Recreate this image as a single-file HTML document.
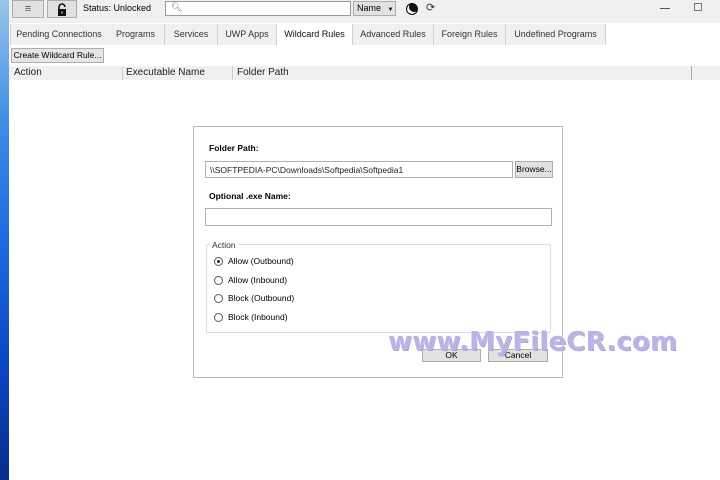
<!DOCTYPE html><html><head><style>
body{margin:0;width:720px;height:480px;position:relative;overflow:hidden;background:#fff;font-family:"Liberation Sans",sans-serif;font-size:9px;color:#000}
.a{position:absolute}
.tb{background:#f0f0f0;border-bottom:1px solid #d8d8d8}
.tab{position:absolute;top:24px;height:21px;line-height:21px;text-align:center;background:#f0f0f0;border-right:1px solid #d0d0d0;color:#333;font-size:9px}
.btn{background:#e1e1e1;border:1px solid #adadad;box-sizing:border-box;text-align:center}
.in{border:1px solid #b0b0b0;box-sizing:border-box;background:#fff}
.r{position:absolute;left:214px;width:7px;height:7px;border:1px solid #555;border-radius:50%}
.rl{position:absolute;left:228px;font-size:8.5px}
</style></head><body>
<div class="a" style="left:0;top:0;width:9px;height:480px;background:linear-gradient(160deg,#9cc6ea 0%,#3f8ee6 25%,#1d6ae0 50%,#0b47c4 75%,#082c8a 100%)"></div>
<div class="a tb" style="left:9px;top:0;width:711px;height:23px"></div>
<div class="a btn" style="left:12px;top:0;width:32px;height:18px;line-height:17px;font-size:11px;color:#555">≡</div>
<div class="a btn" style="left:47px;top:0;width:30px;height:18px"><svg width="12" height="14" style="margin-top:2px" viewBox="0 0 12 14"><path d="M3 6V4a3 3 0 0 1 6 0" stroke="#111" stroke-width="1.6" fill="none"/><rect x="2" y="6" width="8" height="7" fill="#111"/><rect x="5.5" y="8.5" width="1" height="2" fill="#fff"/></svg></div>
<div class="a" style="left:83px;top:3px;font-size:9px">Status: Unlocked</div>
<div class="a in" style="left:165px;top:1px;width:186px;height:15px;border-color:#999"><span style="position:absolute;left:5px;top:0;font-size:9px;color:#777">🔍︎</span></div>
<div class="a btn" style="left:353px;top:1px;width:43px;height:15px;line-height:13px;text-align:left;padding-left:3px;font-size:9px">Name <span style="font-size:6px;margin-left:4px">▼</span></div>
<div class="a" style="left:406px;top:3px;width:10px;height:10px;border-radius:50%;background:#111;border:1px solid #111;box-shadow:inset 2px -2px 0 #fff"></div>
<div class="a" style="left:426px;top:1px;font-size:11px;color:#333">⟳</div>
<div class="a" style="left:660px;top:8px;width:10px;height:1px;background:#555"></div>
<div class="a" style="left:694px;top:3px;width:6px;height:6px;border:1px solid #777"></div>
<div class="a" style="left:9px;top:23px;width:711px;height:22px;background:#fff"></div>
<div class="tab" style="left:10px;width:96px;border-left:1px solid #d0d0d0">Pending Connections</div>
<div class="tab" style="left:107px;width:57px">Programs</div>
<div class="tab" style="left:165px;width:52px">Services</div>
<div class="tab" style="left:218px;width:58px">UWP Apps</div>
<div class="tab" style="left:277px;width:75px;background:#fff;color:#111">Wildcard Rules</div>
<div class="tab" style="left:353px;width:80px">Advanced Rules</div>
<div class="tab" style="left:434px;width:71px">Foreign Rules</div>
<div class="tab" style="left:506px;width:99px">Undefined Programs</div>
<div class="a btn" style="left:11px;top:48px;width:93px;height:15px;line-height:13px;font-size:8.5px;background:#e5e5e5">Create Wildcard Rule...</div>
<div class="a" style="left:9px;top:66px;width:711px;height:14px;background:#f0f0f0"></div>
<div class="a" style="left:14px;top:67px;font-size:10px;color:#222">Action</div>
<div class="a" style="left:122px;top:66px;width:1px;height:14px;background:#ccc"></div>
<div class="a" style="left:126px;top:67px;font-size:10px;color:#222">Executable Name</div>
<div class="a" style="left:232px;top:66px;width:1px;height:14px;background:#ccc"></div>
<div class="a" style="left:237px;top:67px;font-size:10px;color:#222">Folder Path</div>
<div class="a" style="left:691px;top:66px;width:1px;height:14px;background:#aaa"></div>
<div class="a" style="left:193px;top:126px;width:370px;height:252px;border:1px solid #bcbcbc;box-sizing:border-box;background:#fff"></div>
<div class="a" style="left:209px;top:143px;font-weight:bold;font-size:8.5px">Folder Path:</div>
<div class="a in" style="left:205px;top:161px;width:308px;height:17px;padding:3px 4px;font-size:8.5px;color:#222">\\SOFTPEDIA-PC\Downloads\Softpedia\Softpedia1</div>
<div class="a btn" style="left:515px;top:161px;width:38px;height:17px;line-height:15px;font-size:8.5px">Browse...</div>
<div class="a" style="left:209px;top:191px;font-weight:bold;font-size:8.5px">Optional .exe Name:</div>
<div class="a in" style="left:205px;top:208px;width:347px;height:18px"></div>
<div class="a" style="left:206px;top:244px;width:345px;height:89px;border:1px solid #dcdcdc;border-radius:2px;box-sizing:border-box"></div>
<div class="a" style="left:210px;top:240px;background:#fff;padding:0 2px;font-size:8.5px;color:#333">Action</div>
<div class="r" style="top:257px"><div style="width:3px;height:3px;background:#222;border-radius:50%;margin:2px"></div></div><div class="rl" style="top:256px">Allow (Outbound)</div>
<div class="r" style="top:276px"></div><div class="rl" style="top:275px">Allow (Inbound)</div>
<div class="r" style="top:294px"></div><div class="rl" style="top:293px">Block (Outbound)</div>
<div class="r" style="top:313px"></div><div class="rl" style="top:312px">Block (Inbound)</div>
<div class="a btn" style="left:422px;top:349px;width:59px;height:13px;line-height:11px;font-size:8.5px">OK</div>
<div class="a btn" style="left:488px;top:349px;width:60px;height:13px;line-height:11px;font-size:8.5px">Cancel</div>
<div class="a" style="left:388px;top:327px;font-size:26px;font-weight:bold;font-family:'DejaVu Sans',sans-serif;color:#b9b3e6;letter-spacing:0.2px;text-shadow:0 0 2px #fff,1px 1px 0 #8f88c8">www.MyFileCR.com</div>
</body></html>
